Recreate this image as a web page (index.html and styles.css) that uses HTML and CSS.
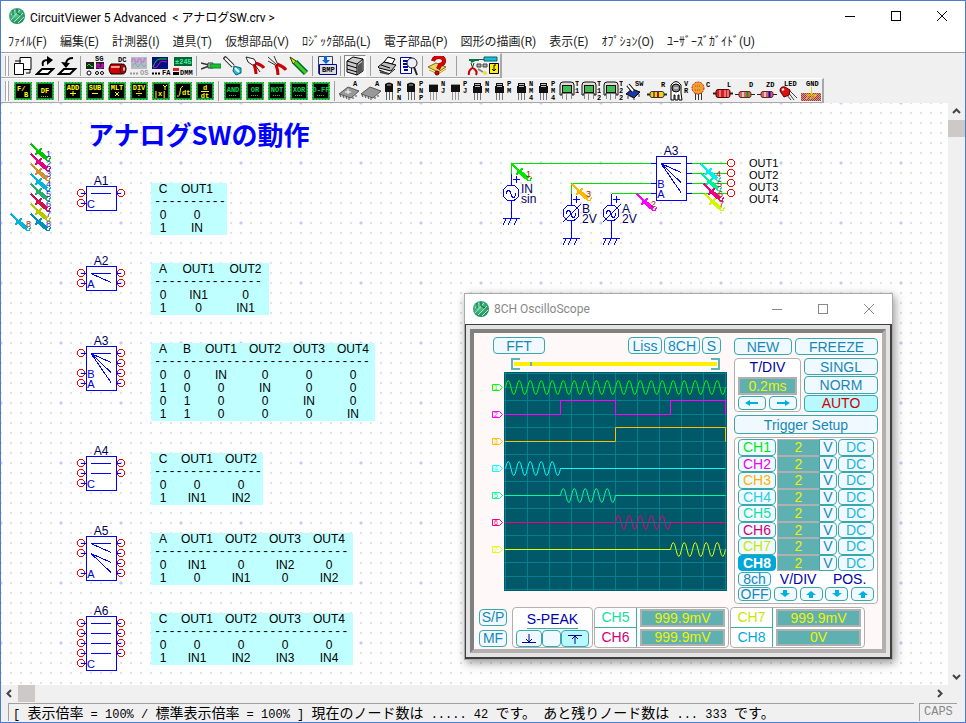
FILE: index.html
```html
<!DOCTYPE html>
<html lang="ja">
<head>
<meta charset="utf-8">
<title>CircuitViewer 5 Advanced</title>
<link rel="stylesheet" href="styles.css">
</head>
<body>
<svg class="sprite" aria-hidden="true">
  <defs>
    <radialGradient id="ball" cx="40%" cy="35%" r="65%"><stop offset="0" stop-color="#5fd39a"/><stop offset="1" stop-color="#1f8a5a"/></radialGradient>
    <pattern id="checker" width="2" height="2" patternUnits="userSpaceOnUse"><rect width="2" height="2" fill="#c99"/><path d="M0 0h1v1h-1zM1 1h1v1h-1z" fill="#a33"/></pattern>
    <symbol id="logo" viewBox="0 0 18 18"><circle cx="9" cy="9" r="8" fill="url(#ball)"/><path d="M3 13L12 3M6 15L15 6M3 8l4-5M10 16l6-6" stroke="#a8ecc8" stroke-width="1"/><path d="M5 3v5M9 2v4l4 2" stroke="#0b5c38" fill="none"/></symbol>
    <symbol id="chip" viewBox="0 0 20 20"><rect x="1" y="1" width="18" height="18" fill="#000"/><rect x="2" y="2" width="16" height="16" fill="none" stroke="#0a9a28" stroke-width="2"/><rect x="1.500" y="1.500" width="17" height="17" fill="none" stroke="#9fe0a0" stroke-dasharray="1 2"/></symbol>
    <symbol id="bjt" viewBox="0 0 20 20"><path d="M2 3q4-3 8 0v8H2z" fill="#111"/><path d="M4 4h4" stroke="#aaa"/><path d="M3.500 11v8M6.500 11v8M9.500 11v8" stroke="#666"/></symbol>
    <symbol id="jfet" viewBox="0 0 20 20"><path d="M2 3h9v8H2z" fill="#111"/><path d="M2 3.500h9" stroke="#999"/><path d="M3.500 11v8M6.500 11v8M9.500 11v8" stroke="#999"/></symbol>
    <symbol id="mos" viewBox="0 0 20 20"><path d="M3 2h7v3h1v7H2V5h1z" fill="#111"/><path d="M4 3.500h5M4 5.500h5" stroke="#bbb"/><path d="M3.500 12v7M6.500 12v7M9.500 12v7" stroke="#777"/></symbol>
    <symbol id="coil" viewBox="0 0 20 20"><path d="M1 14V4q0-3 3-3h8q3 0 3 3v10h-2v-2H3v2z" fill="#ddd" stroke="#111"/><rect x="3.500" y="4.500" width="9" height="7" fill="#0a9a28" stroke="#111"/><path d="M5 5v6M7 5v6M9 5v6M11 5v6" stroke="#7fe07f"/><path d="M3.500 13v5M7.500 13v6M12.500 13v5" stroke="#888"/></symbol>
    <symbol id="opamp" viewBox="0 0 20 20"><path d="M0 13l9-7 11 4-8 7z" fill="#999" stroke="#555"/><path d="M1 14l1 2M4 15l1 2M7 16l1 2M10 17v2M14 16v2M17 14v2" stroke="#444"/></symbol>
    <symbol id="probe" viewBox="-2 -2 26 22" overflow="visible"><path d="M0 0l8 8" stroke="currentColor" stroke-width="1.500"/><path d="M4 10.500l7-6M5 6.500l6 4" stroke="currentColor" stroke-width="2"/><path d="M8 8l8 7" stroke="currentColor" stroke-width="4"/><path d="M15 16.500h3l1.500-3" stroke="currentColor" fill="none"/></symbol>
    <symbol id="source" viewBox="-10 -10 20 20" overflow="visible"><circle r="8" fill="#fff" stroke="#00f"/><path d="M-5 1q2.500-8 5 0t5-1" fill="none" stroke="#00f"/><path d="M2-13.500h7M5.500-17v7" stroke="#00f"/></symbol>
    <symbol id="ground" viewBox="-10 -2 20 10" overflow="visible"><path d="M-8 0h17M-5 1l-3 6M0 1l-3 6M6 1l-3 6" stroke="#00f"/></symbol>
    <symbol id="pin" viewBox="-5 -5 10 10" overflow="visible"><circle r="3.500" fill="none" stroke="#f00"/><path d="M0 .5h5" stroke="#00f"/></symbol>
    <symbol id="pinr" viewBox="-5 -5 10 10" overflow="visible"><circle r="3.500" fill="none" stroke="#f00"/><path d="M0 .5h-4" stroke="#00f"/></symbol>
    <symbol id="arrow" viewBox="0 0 14 8"><path d="M0 4l5-3v2h8v2H5v2z" fill="#00b0e0"/></symbol>
    <symbol id="vdown" viewBox="0 0 12 8"><path d="M4 0h4v3h3L6 7 1 3h3z" fill="#00b0e0"/></symbol>
  </defs>
</svg>

<div class="window">
  <header class="titlebar">
    <svg class="logo"><use href="#logo"/></svg>
    <h1 class="caption">CircuitViewer 5 Advanced&nbsp; &lt; アナログSW.crv &gt;</h1>
    <div class="winbtns">
      <button aria-label="最小化"><svg width="12" height="12"><path d="M1 6.500h10" stroke="#000"/></svg></button>
      <button aria-label="最大化"><svg width="12" height="12"><rect x="1.500" y="1.500" width="9" height="9" fill="none" stroke="#000"/></svg></button>
      <button aria-label="閉じる"><svg width="12" height="12"><path d="M1 1l10 10M11 1L1 11" stroke="#000"/></svg></button>
    </div>
  </header>

  <nav class="menubar">
    <button>ﾌｧｲﾙ(F)</button><button>編集(E)</button><button>計測器(I)</button><button>道具(T)</button><button>仮想部品(V)</button><button>ﾛｼﾞｯｸ部品(L)</button><button>電子部品(P)</button><button>図形の描画(R)</button><button>表示(E)</button><button>ｵﾌﾟｼｮﾝ(O)</button><button>ﾕｰｻﾞｰｽﾞｶﾞｲﾄﾞ(U)</button>
  </nav>

  <div class="toolbars">
    <div class="toolbar">
      <span class="grip"></span>
      <button class="tool" aria-label="新規"><svg viewBox="0 0 20 20"><path d="M7 1.500h11v12H7z" fill="#fff" stroke="#000"/><path d="M1.500 7.500h9v11h-9z" fill="#fff" stroke="#000"/><path d="M2 5h6M13 17h4v-3" fill="none" stroke="#000"/></svg></button>
      <button class="tool" aria-label="開く"><svg viewBox="0 0 20 20"><path d="M2 18l5-5h11l-5 5z" fill="#fff" stroke="#000" stroke-width="2"/><path d="M8 10q-2-6 5-6" fill="none" stroke="#000" stroke-width="2"/><path d="M12 0l6 4-6 5z"/></svg></button>
      <button class="tool" aria-label="保存"><svg viewBox="0 0 20 20"><path d="M2 18l5-5h11l-5 5z" fill="#fff" stroke="#000" stroke-width="2"/><path d="M16 2q-6 0-7 5" fill="none" stroke="#000" stroke-width="2"/><path d="M4 6l9 1-4 5z"/></svg></button>
      <span class="sep"></span>
      <button class="tool" aria-label="信号発生器"><svg viewBox="0 0 20 20"><text x="10" y="5" class="tiny">SG</text><path d="M1 6h8v7H1zM11 6h8v7h-8z" fill="#222"/><path d="M2 10l2-2 3 3 1-1" fill="none" stroke="#0f0"/><path d="M12 12V8h2v4h3V8h1v4" fill="none" stroke="#f0f"/><circle cx="4" cy="17" r="2" fill="#fff" stroke="#000"/><circle cx="12" cy="17" r="1.500" fill="#fff" stroke="#000"/><circle cx="17" cy="17" r="1.500" fill="#fff" stroke="#000"/></svg></button>
      <button class="tool" aria-label="直流電源"><svg viewBox="0 0 20 20"><text x="11" y="6" class="tiny">DC</text><path d="M4 8h11v10H4q-4-5 0-10z" fill="#d00000" stroke="#000"/><path d="M4 11h11" stroke="#f99" stroke-width="2"/><ellipse cx="16" cy="13" rx="3" ry="5" fill="#b00" stroke="#000"/><ellipse cx="17" cy="13" rx="1" ry="2" fill="#ccc"/></svg></button>
      <button class="tool" aria-label="オシロスコープ" disabled><svg viewBox="0 0 20 20"><path d="M2 1h16v12H2z" fill="#b8b8c8"/><path d="M3 6V3h3v3h3V3h3v3h3V3h2" fill="none" stroke="#c070d0"/><path d="M3 10l3-3 3 4 3-4 3 4 2-2" fill="none" stroke="#70b8a0"/><path d="M1 17.500h9" stroke="#999" stroke-width="2" stroke-dasharray="2 1"/><text x="11" y="19" class="tiny dim">OS</text></svg></button>
      <button class="tool" aria-label="周波数分析"><svg viewBox="0 0 20 20"><path d="M1 1h16v12H1z" fill="#001080"/><path d="M2 11q3-8 7-8h7" fill="none" stroke="#0d0"/><path d="M2 12q5 0 6-4t8-2" fill="none" stroke="#d0d"/><path d="M1 17.500h9" stroke="#000" stroke-width="2" stroke-dasharray="2 1"/><text x="11" y="19" class="tiny">FA</text></svg></button>
      <button class="tool" aria-label="デジタルマルチメーター"><svg viewBox="0 0 20 20"><path d="M1 1h18v9H1z" fill="#063"/><text x="2" y="8" class="tiny mint">±245</text><path d="M0 12h6v3H0z" fill="#e02020"/><path d="M0 16h6v3H0z"/><text x="7" y="19" class="tiny">DMM</text></svg></button>
      <span class="sep"></span>
      <button class="tool" aria-label="ニッパー"><svg viewBox="0 0 20 20"><path d="M0 7l8 2M0 13l8-3" stroke="#333" stroke-width="1.500"/><path d="M7 7h5v5H7z" fill="#ddd" stroke="#333"/><path d="M9 8h11v4H9z" fill="#20c020" stroke="#084"/></svg></button>
      <button class="tool" aria-label="はんだごて"><svg viewBox="0 0 20 20"><path d="M1 1l9 9" stroke="#333" stroke-width="4"/><path d="M2 2l8 8" stroke="#fff" stroke-width="2"/><path d="M11 10l7 2v5l-5 2-3-4z" fill="#30b8e0" stroke="#066"/><path d="M12 12l4 4" stroke="#fff" stroke-width="2"/></svg></button>
      <button class="tool" aria-label="ペンチ"><svg viewBox="0 0 20 20"><path d="M1 1l8 2 3 5-3 2-6-4z" fill="#fff" stroke="#222"/><path d="M9 8q2 7 2 10M10 7q7 2 9 5" fill="none" stroke="#c00" stroke-width="3"/><path d="M10 9l5 7" stroke="#222"/></svg></button>
      <button class="tool" aria-label="ラジオペンチ"><svg viewBox="0 0 20 20"><path d="M1 1l9 8M7 0l4 9M1 5l9 5" stroke="#333"/><path d="M9 9q2 5 2 10M10 8q7 3 9 6" fill="none" stroke="#c00" stroke-width="3"/></svg></button>
      <button class="tool" aria-label="プローブ"><svg viewBox="0 0 20 20"><path d="M1 1l6 4L4 8z" fill="#dd0" stroke="#240"/><path d="M6 6l11 11" stroke="#063" stroke-width="6"/><path d="M6 6l11 11" stroke="#40d020" stroke-width="3"/></svg></button>
      <span class="sep"></span>
      <button class="tool" aria-label="BMP"><svg viewBox="0 0 20 20"><path d="M1.500.5h14v17h-14z" fill="#e8f0ff" stroke="#345"/><path d="M7 0h3v4h3l-4 4-4-4h2z" fill="#1060e0"/><path d="M2.500 8.500h17v10h-17z" fill="#ddd" stroke="#0000a0"/><text x="5" y="16" class="tiny">BMP</text></svg></button>
      <span class="sep"></span>
      <button class="tool pressed" aria-label="部品箱"><svg viewBox="0 0 20 20"><path d="M2 5l6-4 10 2v12l-6 4-10-3z" fill="#ccc" stroke="#000"/><path d="M2 5l10 3 6-5M12 8v11M2 9l10 3M2 13l10 3" fill="none" stroke="#000"/><path d="M13 9l4-3v9l-4 3z" fill="#555"/></svg></button>
      <span class="sep wide"></span>
      <button class="tool" aria-label="印刷"><svg viewBox="0 0 20 20"><path d="M7 6l4-5 7 2-3 5z" fill="#fff" stroke="#000"/><path d="M1 11l6-5 12 3-5 6-12-3z" fill="#bbb" stroke="#000"/><path d="M2 14l10 4 6-5M4 9l9 3" fill="none" stroke="#000"/><path d="M3 16l9 2" stroke="#444" stroke-width="2"/></svg></button>
      <button class="tool" aria-label="印刷プレビュー"><svg viewBox="0 0 20 20"><path d="M1.500 1.500h11v16h-11z" fill="#fff" stroke="#00a"/><path d="M4 5h5M4 8h4M4 11h5M5 14h4" stroke="#00a" stroke-width="2"/><circle cx="13" cy="7" r="5" fill="#eef" stroke="#222"/><path d="M15 11l3 8" stroke="#222" stroke-width="2"/></svg></button>
      <span class="sep"></span>
      <button class="tool" aria-label="ヘルプ"><svg viewBox="0 0 20 20"><path d="M1 11l8-4 10 4-8 5z" fill="#e8d860" stroke="#860"/><path d="M2 14l9 4 8-5" fill="none" stroke="#c8a000"/><path d="M6 5q1-4 6-4t5 4q0 3-4 4l-2 4" fill="none" stroke="#600" stroke-width="4"/><path d="M6 5q1-4 6-4t5 4q0 3-4 4l-2 4" fill="none" stroke="#e00000" stroke-width="3"/><circle cx="10" cy="17" r="2" fill="#e00000" stroke="#600"/></svg></button>
      <span class="sep far"></span>
      <button class="tool long" aria-label="道具箱"><svg viewBox="0 0 32 20"><path d="M2 4h10M4 6l4-2" stroke="#074" stroke-width="2"/><path d="M12 3.500h6" stroke="#444"/><path d="M17 1h13v4H17z" fill="#20b8e0" stroke="#066"/><path d="M10 8h4v3h-4zM16 8h4v3h-4z" fill="#aaa" stroke="#444"/><path d="M4 7l2 6M7 7l-2 6" stroke="#333"/><path d="M5 12q-4 3-3 7M6 12q5 3 3 7" fill="none" stroke="#c00" stroke-width="2"/><path d="M11 13l5 3" stroke="#888" stroke-width="2"/><circle cx="18" cy="17" r="2" fill="#fd2"/><path d="M22.500 7.500h9v10h-9z" fill="#fff000" stroke="#000"/><path d="M29 9h-2v6m-2-2l2 2 2-2" fill="none" stroke="#000"/></svg></button>
    </div>
    <div class="toolbar">
      <span class="grip"></span>
      <button class="tool"><svg viewBox="0 0 20 20"><use href="#chip"/><text x="4" y="10" class="lcd">F/</text><text x="11" y="16" class="lcd">B</text></svg></button>
      <button class="tool"><svg viewBox="0 0 20 20"><use href="#chip"/><text x="10" y="12" class="lcd mid">DF</text><path d="M6 15.500h8" stroke="#aa0" stroke-dasharray="1 1"/></svg></button>
      <span class="sep"></span>
      <button class="tool"><svg viewBox="0 0 20 20"><use href="#chip"/><text x="10" y="9" class="lcd mid">ADD</text><path d="M7 12.500h6M10 10v5" stroke="#ff0"/></svg></button>
      <button class="tool"><svg viewBox="0 0 20 20"><use href="#chip"/><text x="10" y="9" class="lcd mid">SUB</text><path d="M7 12.500h6" stroke="#ff0"/></svg></button>
      <button class="tool"><svg viewBox="0 0 20 20"><use href="#chip"/><text x="10" y="9" class="lcd mid">MLT</text><path d="M8 11l4 4M12 11l-4 4" stroke="#ff0"/></svg></button>
      <button class="tool"><svg viewBox="0 0 20 20"><use href="#chip"/><text x="10" y="9" class="lcd mid">DIV</text><path d="M7 12.500h6M10 10v1M10 14v1" stroke="#ff0"/></svg></button>
      <button class="tool"><svg viewBox="0 0 20 20"><use href="#chip"/><text x="9" y="15" class="lcd mid">|x|</text><path d="M12 4l2 2 2-2M14 6v3" fill="none" stroke="#ff0"/></svg></button>
      <button class="tool"><svg viewBox="0 0 20 20"><use href="#chip"/><path d="M4 15q3 1 3-4t3-6" fill="none" stroke="#ff0"/><text x="9" y="14" class="lcd">dt</text></svg></button>
      <button class="tool"><svg viewBox="0 0 20 20"><use href="#chip"/><text x="10" y="9" class="lcd mid">d</text><path d="M6 10.500h8" stroke="#ff0"/><text x="10" y="17" class="lcd mid">dt</text></svg></button>
      <span class="sep"></span>
      <button class="tool"><svg viewBox="0 0 20 20"><use href="#chip"/><text x="10" y="11" class="lcd logic">AND</text><path d="M6 14.500h8" stroke="#0c4" stroke-dasharray="1 1"/></svg></button>
      <button class="tool"><svg viewBox="0 0 20 20"><use href="#chip"/><text x="10" y="11" class="lcd logic">OR</text><path d="M6 14.500h8" stroke="#0c4" stroke-dasharray="1 1"/></svg></button>
      <button class="tool"><svg viewBox="0 0 20 20"><use href="#chip"/><text x="10" y="11" class="lcd logic">NOT</text><path d="M6 14.500h8" stroke="#0c4" stroke-dasharray="1 1"/></svg></button>
      <button class="tool"><svg viewBox="0 0 20 20"><use href="#chip"/><text x="10" y="11" class="lcd logic">XOR</text><path d="M6 14.500h8" stroke="#0c4" stroke-dasharray="1 1"/></svg></button>
      <button class="tool"><svg viewBox="0 0 20 20"><use href="#chip"/><text x="10" y="11" class="lcd logic">D-FF</text><path d="M6 14.500h8" stroke="#0c4" stroke-dasharray="1 1"/></svg></button>
      <span class="sep"></span>
      <button class="tool"><svg viewBox="0 0 20 20"><use href="#opamp"/><path d="M6 11h6M9 8v5" stroke="#fff"/><text x="14" y="5" class="tiny">A</text></svg></button>
      <button class="tool"><svg viewBox="0 0 20 20"><use href="#opamp"/><text x="14" y="5" class="tiny">A</text></svg></button>
      <button class="tool"><svg viewBox="0 0 20 20"><use href="#bjt"/><text x="14" y="5" class="tiny">N</text><text x="14" y="12" class="tiny">P</text><text x="14" y="19" class="tiny">N</text></svg></button>
      <button class="tool"><svg viewBox="0 0 20 20"><use href="#bjt"/><text x="14" y="5" class="tiny">P</text><text x="14" y="12" class="tiny">N</text><text x="14" y="19" class="tiny">P</text></svg></button>
      <button class="tool"><svg viewBox="0 0 20 20"><use href="#jfet"/><text x="14" y="5" class="tiny">N</text><text x="14" y="12" class="tiny">J</text></svg></button>
      <button class="tool"><svg viewBox="0 0 20 20"><use href="#jfet"/><text x="14" y="5" class="tiny">P</text><text x="14" y="12" class="tiny">J</text></svg></button>
      <button class="tool"><svg viewBox="0 0 20 20"><use href="#mos"/><text x="14" y="5" class="tiny">N</text><text x="14" y="12" class="tiny">M</text></svg></button>
      <button class="tool"><svg viewBox="0 0 20 20"><use href="#mos"/><text x="14" y="5" class="tiny">P</text><text x="14" y="12" class="tiny">M</text></svg></button>
      <button class="tool"><svg viewBox="0 0 20 20"><use href="#mos"/><text x="14" y="5" class="tiny">N</text><text x="14" y="12" class="tiny">M</text><text x="14" y="19" class="tiny">4</text></svg></button>
      <button class="tool"><svg viewBox="0 0 20 20"><use href="#mos"/><text x="14" y="5" class="tiny">P</text><text x="14" y="12" class="tiny">M</text><text x="14" y="19" class="tiny">4</text></svg></button>
      <button class="tool"><svg viewBox="0 0 20 20"><use href="#coil"/><text x="16" y="5" class="tiny">T</text><text x="16" y="12" class="tiny">1</text></svg></button>
      <button class="tool"><svg viewBox="0 0 20 20"><use href="#coil"/><text x="16" y="5" class="tiny">T</text><text x="16" y="12" class="tiny">1</text><text x="16" y="19" class="tiny">2</text></svg></button>
      <button class="tool"><svg viewBox="0 0 20 20"><use href="#coil"/><text x="16" y="5" class="tiny">T</text><text x="16" y="12" class="tiny">2</text><text x="16" y="19" class="tiny">2</text></svg></button>
      <button class="tool"><svg viewBox="0 0 20 20"><path d="M1 13l6-5 8 3-6 6z" fill="#1838a0" stroke="#000"/><path d="M3 4l5 6" stroke="#000" stroke-width="4"/><path d="M3 4l5 6" stroke="#fff" stroke-width="2"/><path d="M3 15v3M9 17v2M14 13v3" stroke="#333"/><text x="10" y="5" class="tiny">SW</text></svg></button>
      <button class="tool"><svg viewBox="0 0 20 20"><path d="M0 13.500h20" stroke="#222" stroke-width="2"/><rect x="3" y="10.500" width="14" height="6" rx="2" fill="#e0d820" stroke="#333"/><path d="M7 11v5" stroke="#a50" stroke-width="2"/><path d="M11 11v5" stroke="#c00" stroke-width="2"/><text x="14" y="6" class="tiny">R</text></svg></button>
      <button class="tool"><svg viewBox="0 0 20 20"><path d="M2 12V4q5-7 10 0v8l1 7h-3v-5H9v5H6v-5H5v5H2z" fill="#fff" stroke="#000"/><circle cx="7" cy="7" r="4" fill="#888" stroke="#000"/><path d="M5 7h4" stroke="#fff"/><text x="15" y="5" class="tiny">V</text><text x="15" y="12" class="tiny">R</text></svg></button>
      <button class="tool"><svg viewBox="0 0 20 20"><path d="M4.500 12v7M7.500 12v7M10.500 12v7" stroke="#333"/><circle cx="7" cy="7" r="6" fill="#f0a030" stroke="#b02010" stroke-dasharray="2 1"/><path d="M4 5h6M4 9h6" stroke="#d04020" stroke-dasharray="1 1"/><text x="15" y="6" class="tiny">C</text></svg></button>
      <button class="tool"><svg viewBox="0 0 20 20"><path d="M0 12.500h20" stroke="#222" stroke-width="2"/><rect x="3" y="8.500" width="14" height="8" rx="2" fill="#d02020" stroke="#500"/><path d="M7 9v7M12 9v7M15 9v7" stroke="#fcc"/><text x="14" y="6" class="tiny">L</text></svg></button>
      <button class="tool"><svg viewBox="0 0 20 20"><path d="M0 13.500h20" stroke="#222"/><rect x="4" y="10.500" width="12" height="6" rx="2" fill="#e06060" stroke="#622"/><path d="M8 11v5" stroke="#ccc" stroke-width="2"/><path d="M12.500 11v5" stroke="#0a0" stroke-width="2"/><text x="14" y="6" class="tiny">D</text></svg></button>
      <button class="tool"><svg viewBox="0 0 20 20"><path d="M0 13.500h20" stroke="#222"/><rect x="4" y="10.500" width="12" height="6" rx="2" fill="#e06060" stroke="#622"/><path d="M8 11v5" stroke="#ccc" stroke-width="2"/><path d="M12.500 11v5" stroke="#00d" stroke-width="2"/><text x="9" y="6" class="tiny">ZD</text></svg></button>
      <button class="tool"><svg viewBox="0 0 20 20"><path d="M9 11l6 8M11 10l7 7M7 13l5 6" stroke="#444"/><path d="M1 10q0-5 5-4l5 3-1 5-5 2z" fill="#e01010" stroke="#500"/><path d="M3 9l2-1" stroke="#fff" stroke-width="2"/><text x="5" y="5" class="tiny">LED</text></svg></button>
      <button class="tool"><svg viewBox="0 0 20 20"><rect x="0" y="12" width="20" height="8" fill="url(#checker)"/><path d="M10.500 6v8M5 14h11M8 14l-3 4M12 14l-3 4M15 14l-3 4" stroke="#e8d800"/><text x="5" y="5" class="tiny">GND</text></svg></button>
    </div>
  </div>

  <main class="workspace">
    <div class="canvas">
      <svg class="schematic">
        <g transform="translate(-1 -103)">
          <text x="88" y="145" class="heading">アナログSWの動作</text>

          <g class="probes">
            <g color="#00c800"><use href="#probe" x="29" y="142" width="26" height="22"/></g><text x="46" y="157">1</text>
            <g color="#e6007e"><use href="#probe" x="29" y="152" width="26" height="22"/></g><text x="46" y="167">2</text>
            <g color="#d09030"><use href="#probe" x="29" y="162" width="26" height="22"/></g><text x="46" y="177">3</text>
            <g color="#00b4dc"><use href="#probe" x="29" y="172" width="26" height="22"/></g><text x="46" y="187">4</text>
            <g color="#20b070"><use href="#probe" x="29" y="182" width="26" height="22"/></g><text x="46" y="197">5</text>
            <g color="#d01050"><use href="#probe" x="29" y="192" width="26" height="22"/></g><text x="46" y="207">6</text>
            <g color="#b8c800"><use href="#probe" x="29" y="202" width="26" height="22"/></g><text x="46" y="217">7</text>
            <g color="#0090c0"><use href="#probe" x="29" y="212" width="26" height="22"/></g><text x="46" y="227">8</text>
            <g color="#00b4dc"><use href="#probe" x="9" y="212" width="26" height="22"/></g><text x="26" y="227" class="live">8</text>
          </g>

          <g class="part">
            <text x="101" y="185">A1</text><rect x="86.500" y="186.500" width="30" height="24"/>
            <path d="M91 193.500h20"/><text x="91" y="208" class="port">C</text>
            <use href="#pin" x="76" y="188" width="10" height="10"/><use href="#pin" x="76" y="198" width="10" height="10"/><use href="#pinr" x="116" y="188" width="10" height="10"/>
          </g>
          <g class="part">
            <text x="101" y="265">A2</text><rect x="86.500" y="266.500" width="30" height="24"/>
            <path d="M111 273.500h-20l20 9"/><text x="91" y="288" class="port">A</text>
            <use href="#pin" x="76" y="268" width="10" height="10"/><use href="#pin" x="76" y="278" width="10" height="10"/><use href="#pinr" x="116" y="268" width="10" height="10"/><use href="#pinr" x="116" y="278" width="10" height="10"/>
          </g>
          <g class="part">
            <text x="101" y="345">A3</text><rect x="86.500" y="346.500" width="30" height="44"/>
            <path d="M111 353.500h-20l20 9M91 353.500l20 19M91 353.500l20 29"/><text x="91" y="378" class="port">B</text><text x="91" y="388" class="port">A</text>
            <use href="#pin" x="76" y="348" width="10" height="10"/><use href="#pin" x="76" y="368" width="10" height="10"/><use href="#pin" x="76" y="378" width="10" height="10"/><use href="#pinr" x="116" y="348" width="10" height="10"/><use href="#pinr" x="116" y="358" width="10" height="10"/><use href="#pinr" x="116" y="368" width="10" height="10"/><use href="#pinr" x="116" y="378" width="10" height="10"/>
          </g>
          <g class="part">
            <text x="101" y="455">A4</text><rect x="86.500" y="456.500" width="30" height="34"/>
            <path d="M91 463.500h20M91 473.500h20"/><text x="91" y="488" class="port">C</text>
            <use href="#pin" x="76" y="458" width="10" height="10"/><use href="#pin" x="76" y="468" width="10" height="10"/><use href="#pin" x="76" y="478" width="10" height="10"/><use href="#pinr" x="116" y="458" width="10" height="10"/><use href="#pinr" x="116" y="468" width="10" height="10"/>
          </g>
          <g class="part">
            <text x="101" y="535">A5</text><rect x="86.500" y="536.500" width="30" height="44"/>
            <path d="M111 543.500h-20l20 9M111 562.500l-20-9l20 19"/><text x="91" y="578" class="port">A</text>
            <use href="#pin" x="76" y="538" width="10" height="10"/><use href="#pin" x="76" y="548" width="10" height="10"/><use href="#pin" x="76" y="568" width="10" height="10"/><use href="#pinr" x="116" y="538" width="10" height="10"/><use href="#pinr" x="116" y="548" width="10" height="10"/><use href="#pinr" x="116" y="558" width="10" height="10"/><use href="#pinr" x="116" y="568" width="10" height="10"/>
          </g>
          <g class="part">
            <text x="101" y="615">A6</text><rect x="86.500" y="616.500" width="30" height="54"/>
            <path d="M91 623.500h20M91 633.500h20M91 643.500h20M91 653.500h20"/><text x="91" y="668" class="port">C</text>
            <use href="#pin" x="76" y="618" width="10" height="10"/><use href="#pin" x="76" y="628" width="10" height="10"/><use href="#pin" x="76" y="638" width="10" height="10"/><use href="#pin" x="76" y="648" width="10" height="10"/><use href="#pin" x="76" y="658" width="10" height="10"/><use href="#pinr" x="116" y="618" width="10" height="10"/><use href="#pinr" x="116" y="628" width="10" height="10"/><use href="#pinr" x="116" y="638" width="10" height="10"/><use href="#pinr" x="116" y="648" width="10" height="10"/>
          </g>

          <path d="M511.500 174V163.500H651M571.500 194V183.500H651M611.500 193.500H651M691 163.500h37M691 173.500h37M691 183.500h37M691 193.500h37" fill="none" stroke="#00e000"/>
          <path d="M511.500 174v44M571.500 194v44M611.500 194v44M651 163.500h5M651 183.500h5M651 193.500h5M687 163.500h5M687 173.500h5M687 183.500h5M687 193.500h5" fill="none" stroke="#00f"/>
          <g class="part">
            <text x="671" y="155">A3</text><rect x="656.500" y="156.500" width="30" height="44"/>
            <path d="M681 163.500h-20l20 9M661 163.500l20 19M661 163.500l20 29"/><text x="661" y="188" class="port">B</text><text x="661" y="198" class="port">A</text>
          </g>
          <g fill="none" stroke="#f00"><circle cx="731" cy="163" r="3.500"/><circle cx="731" cy="173" r="3.500"/><circle cx="731" cy="183" r="3.500"/><circle cx="731" cy="193" r="3.500"/></g>
          <use href="#source" x="501" y="183" width="20" height="20"/><use href="#source" x="561" y="203" width="20" height="20"/><use href="#source" x="601" y="203" width="20" height="20"/>
          <path d="M563 222l18-18M603 222l18-18" stroke="#00f"/>
          <use href="#ground" x="501" y="216" width="20" height="10"/><use href="#ground" x="561" y="236" width="20" height="10"/><use href="#ground" x="601" y="236" width="20" height="10"/>
          <g class="names">
            <text x="521" y="193">IN</text><text x="521" y="203">sin</text>
            <text x="582" y="213">B</text><text x="582" y="223">2V</text>
            <text x="622" y="213">A</text><text x="622" y="223">2V</text>
          </g>
          <g class="outs">
            <text x="749" y="167">OUT1</text><text x="749" y="179">OUT2</text><text x="749" y="191">OUT3</text><text x="749" y="203">OUT4</text>
          </g>
          <g class="probes live">
            <g color="#00e800"><use href="#probe" x="510" y="162" width="26" height="22"/></g><text x="526" y="177">1</text>
            <g color="#ffb800"><use href="#probe" x="570" y="182" width="26" height="22"/></g><text x="586" y="197">3</text>
            <g color="#f0f"><use href="#probe" x="635" y="192" width="26" height="22"/></g><text x="651" y="207">2</text>
            <g color="#00f0f0"><use href="#probe" x="699" y="162" width="26" height="22"/></g><text x="716" y="177">4</text>
            <g color="#00f0a0"><use href="#probe" x="700" y="172" width="26" height="22"/></g><text x="717" y="187">5</text>
            <g color="#f00080"><use href="#probe" x="702" y="182" width="26" height="22"/></g><text x="718" y="197">6</text>
            <g color="#d0f800"><use href="#probe" x="703" y="192" width="26" height="22"/></g><text x="719" y="207">7</text>
          </g>
        </g>
      </svg>

      <table class="truth t1">
        <colgroup><col class="sel"><col class="out"></colgroup>
        <tr><th>C</th><th>OUT1</th></tr>
        <tr class="rule"><td colspan="2">----------</td></tr>
        <tr><td>0</td><td>0</td></tr><tr><td>1</td><td>IN</td></tr>
      </table>
      <table class="truth t2">
        <colgroup><col class="sel"><col class="broad"><col class="broad"></colgroup>
        <tr><th>A</th><th>OUT1</th><th>OUT2</th></tr>
        <tr class="rule"><td colspan="3">---------------</td></tr>
        <tr><td>0</td><td>IN1</td><td>0</td></tr><tr><td>1</td><td>0</td><td>IN1</td></tr>
      </table>
      <table class="truth t3">
        <colgroup><col class="sel"><col class="sel"><col class="out"><col class="out"><col class="out"><col class="out"></colgroup>
        <tr><th>A</th><th>B</th><th>OUT1</th><th>OUT2</th><th>OUT3</th><th>OUT4</th></tr>
        <tr class="rule"><td colspan="6">------------------------------</td></tr>
        <tr><td>0</td><td>0</td><td>IN</td><td>0</td><td>0</td><td>0</td></tr>
        <tr><td>1</td><td>0</td><td>0</td><td>IN</td><td>0</td><td>0</td></tr>
        <tr><td>0</td><td>1</td><td>0</td><td>0</td><td>IN</td><td>0</td></tr>
        <tr><td>1</td><td>1</td><td>0</td><td>0</td><td>0</td><td>IN</td></tr>
      </table>
      <table class="truth t4">
        <colgroup><col class="sel"><col class="out"><col class="out"></colgroup>
        <tr><th>C</th><th>OUT1</th><th>OUT2</th></tr>
        <tr class="rule"><td colspan="3">---------------</td></tr>
        <tr><td>0</td><td>0</td><td>0</td></tr><tr><td>1</td><td>IN1</td><td>IN2</td></tr>
      </table>
      <table class="truth t5">
        <colgroup><col class="sel"><col class="out"><col class="out"><col class="out"><col class="out"></colgroup>
        <tr><th>A</th><th>OUT1</th><th>OUT2</th><th>OUT3</th><th>OUT4</th></tr>
        <tr class="rule"><td colspan="5">---------------------------</td></tr>
        <tr><td>0</td><td>IN1</td><td>0</td><td>IN2</td><td>0</td></tr><tr><td>1</td><td>0</td><td>IN1</td><td>0</td><td>IN2</td></tr>
      </table>
      <table class="truth t6">
        <colgroup><col class="sel"><col class="out"><col class="out"><col class="out"><col class="out"></colgroup>
        <tr><th>C</th><th>OUT1</th><th>OUT2</th><th>OUT3</th><th>OUT4</th></tr>
        <tr class="rule"><td colspan="5">---------------------------</td></tr>
        <tr><td>0</td><td>0</td><td>0</td><td>0</td><td>0</td></tr><tr><td>1</td><td>IN1</td><td>IN2</td><td>IN3</td><td>IN4</td></tr>
      </table>

      <section class="scope">
        <header class="scope-title">
          <svg class="logo"><use href="#logo"/></svg>
          <h2 class="caption">8CH OscilloScope</h2>
          <div class="winbtns">
            <button aria-label="最小化"><svg width="12" height="12"><path d="M1 6.500h10" stroke="#888"/></svg></button>
            <button aria-label="最大化"><svg width="12" height="12"><rect x="1.500" y="1.500" width="9" height="9" fill="none" stroke="#888"/></svg></button>
            <button aria-label="閉じる"><svg width="12" height="12"><path d="M1 1l10 10M11 1L1 11" stroke="#888"/></svg></button>
          </div>
        </header>
        <div class="bezel"><div class="face">
          <div class="upper">
            <div class="display">
              <div class="modes"><button class="key fft">FFT</button><button class="key liss">Liss</button><button class="key ch8">8CH</button><button class="key s">S</button></div>
              <svg class="range" viewBox="0 0 211 14"><path d="M10 2H2v10h8M201 2h8v10h-8" fill="none" stroke="#5fb4b4" stroke-width="2"/><rect x="4" y="5" width="203" height="4" fill="#fff000"/><rect x="20" y="5" width="2" height="4" fill="#5fb4b4"/></svg>
              <svg class="screen" viewBox="0 0 236 219">
                <rect x="12" width="223" height="219" fill="#005868"/>
                <path d="M13.500 0v219M35.500 0v219M57.500 0v219M79.500 0v219M101.500 0v219M123.500 0v219M145.500 0v219M167.500 0v219M189.500 0v219M211.500 0v219M233.500 0v219M12 1.500h223M12 28.500h223M12 55.500h223M12 82.500h223M12 109.500h223M12 136.500h223M12 163.500h223M12 190.500h223M12 217.500h223M12 15.500h223M12 42.500h223M12 69.500h223M12 96.500h223M12 123.500h223M12 150.500h223M12 177.500h223M12 204.500h223" stroke="#00808c"/>
                <g class="traces">
                  <path stroke="#00ff00" d="M13.500 15.500q2.750-14 5.500 0t5.500 0t5.500 0t5.500 0t5.500 0t5.500 0t5.500 0t5.500 0t5.500 0t5.500 0t5.500 0t5.500 0t5.500 0t5.500 0t5.500 0t5.500 0t5.500 0t5.500 0t5.500 0t5.500 0t5.500 0t5.500 0t5.500 0t5.500 0t5.500 0t5.500 0t5.500 0t5.500 0t5.500 0t5.500 0t5.500 0t5.500 0t5.500 0t5.500 0t5.500 0t5.500 0t5.500 0t5.500 0t5.500 0t5.500 0"/>
                  <path stroke="#ff00ff" d="M13 42.500H68.500V28.500H123.500V42.500H178.500V28.500H233.500V42.500"/>
                  <path stroke="#ffc000" d="M13 69.500H123.500V55.500H233.500V69.500"/>
                  <path stroke="#00ffff" d="M13.500 96.500q2.750-14 5.500 0t5.500 0t5.500 0t5.500 0t5.500 0t5.500 0t5.500 0t5.500 0t5.500 0t5.500 0h165"/>
                  <path stroke="#00ff9c" d="M13 123.500H68.500q2.750-14 5.500 0t5.500 0t5.500 0t5.500 0t5.500 0t5.500 0t5.500 0t5.500 0t5.500 0t5.500 0h110"/>
                  <path stroke="#f00080" d="M13 150.500H123.500q2.750-14 5.500 0t5.500 0t5.500 0t5.500 0t5.500 0t5.500 0t5.500 0t5.500 0t5.500 0t5.500 0h55"/>
                  <path stroke="#e0ff00" d="M13 177.500H178.500q2.750-14 5.500 0t5.500 0t5.500 0t5.500 0t5.500 0t5.500 0t5.500 0t5.500 0t5.500 0t5.500 0"/>
                </g>
                <g class="tags">
                  <g color="#00ff00"><path d="M.5 12.500h7l3 3-3 3h-7z"/><text x="2" y="18">1</text></g>
                  <g color="#ff00ff"><path d="M.5 39.500h7l3 3-3 3h-7z"/><text x="2" y="45">2</text></g>
                  <g color="#ffc000"><path d="M.5 66.500h7l3 3-3 3h-7z"/><text x="2" y="72">3</text></g>
                  <g color="#00ffff"><path d="M.5 93.500h7l3 3-3 3h-7z"/><text x="2" y="99">4</text></g>
                  <g color="#00ff9c"><path d="M.5 120.500h7l3 3-3 3h-7z"/><text x="2" y="126">5</text></g>
                  <g color="#f00080"><path d="M.5 147.500h7l3 3-3 3h-7z"/><text x="2" y="153">6</text></g>
                  <g color="#e0ff00"><path d="M.5 174.500h7l3 3-3 3h-7z"/><text x="2" y="180">7</text></g>
                </g>
              </svg>
            </div>
            <div class="controls">
              <div class="run"><button class="key">NEW</button><button class="key">FREEZE</button></div>
              <div class="time">
                <div class="panel tdiv">
                  <span class="legend">T/DIV</span><output class="readout">0.2ms</output>
                  <div class="pair"><button class="key" aria-label="T/DIV 減"><svg width="14" height="8"><use href="#arrow"/></svg></button><button class="key" aria-label="T/DIV 増"><svg width="14" height="8" class="flip"><use href="#arrow"/></svg></button></div>
                </div>
                <div class="sweep"><button class="key">SINGL</button><button class="key">NORM</button><button class="key active">AUTO</button></div>
              </div>
              <button class="key trigger">Trigger Setup</button>
              <div class="panel channels">
                <div class="rows">
                  <button class="key c1">CH1</button><output class="readout">2</output><button class="key unit">V</button><button class="key dc">DC</button>
                  <button class="key c2">CH2</button><output class="readout">2</output><button class="key unit">V</button><button class="key dc">DC</button>
                  <button class="key c3">CH3</button><output class="readout">2</output><button class="key unit">V</button><button class="key dc">DC</button>
                  <button class="key c4">CH4</button><output class="readout">2</output><button class="key unit">V</button><button class="key dc">DC</button>
                  <button class="key c5">CH5</button><output class="readout">2</output><button class="key unit">V</button><button class="key dc">DC</button>
                  <button class="key c6">CH6</button><output class="readout">2</output><button class="key unit">V</button><button class="key dc">DC</button>
                  <button class="key c7">CH7</button><output class="readout">2</output><button class="key unit">V</button><button class="key dc">DC</button>
                  <button class="key selected">CH8</button><output class="readout">2</output><button class="key unit">V</button><button class="key dc">DC</button>
                </div>
                <div class="adjust">
                  <button class="key">8ch</button><span class="legend two">V/DIV</span><span class="legend two">POS.</span>
                  <button class="key">OFF</button>
                  <button class="key" aria-label="V/DIV 減"><svg width="12" height="8"><use href="#vdown"/></svg></button><button class="key" aria-label="V/DIV 増"><svg width="12" height="8" class="flip"><use href="#vdown"/></svg></button><button class="key" aria-label="POS. 減"><svg width="12" height="8"><use href="#vdown"/></svg></button><button class="key" aria-label="POS. 増"><svg width="12" height="8" class="flip"><use href="#vdown"/></svg></button>
                </div>
              </div>
            </div>
          </div>
          <div class="lower">
            <div class="side"><button class="key">S/P</button><button class="key">MF</button></div>
            <div class="panel peak">
              <span class="legend">S-PEAK</span>
              <div class="peaks"><button class="key" aria-label="下ピーク"><svg width="14" height="10"><path d="M7 0v8M4 5l3 3 3-3M0 8.500h14" fill="none" stroke="#0000a0"/></svg></button><button class="key" aria-label="なし"></button><button class="key active" aria-label="上ピーク"><svg width="14" height="10"><path d="M7 10V2M4 5l3-3 3 3M0 1.500h14" fill="none" stroke="#0000a0"/></svg></button></div>
            </div>
            <div class="panel meter"><span class="c5">CH5</span><output class="readout">999.9mV</output><span class="c6">CH6</span><output class="readout">999.9mV</output></div>
            <div class="panel meter"><span class="c7">CH7</span><output class="readout">999.9mV</output><span class="c8">CH8</span><output class="readout">0V</output></div>
          </div>
        </div></div>
      </section>
    </div>

    <div class="vscroll">
      <button aria-label="上へ"><svg width="9" height="9"><path d="M1 6l3.500-3.500L8 6" fill="none" stroke="#444" stroke-width="2"/></svg></button>
      <span class="thumb"></span>
      <button class="end" aria-label="下へ"><svg width="9" height="9"><path d="M1 3l3.500 3.500L8 3" fill="none" stroke="#444" stroke-width="2"/></svg></button>
    </div>
    <div class="hscroll">
      <button aria-label="左へ"><svg width="9" height="9"><path d="M6 1L2.500 4.500 6 8" fill="none" stroke="#444" stroke-width="2"/></svg></button>
      <span class="thumb"></span>
      <button class="end" aria-label="右へ"><svg width="9" height="9"><path d="M3 1l3.500 3.500L3 8" fill="none" stroke="#444" stroke-width="2"/></svg></button>
    </div>
  </main>

  <footer class="statusbar">
    <p class="message"><span class="half">[ </span>表示倍率<span class="half"> = 100% / </span>標準表示倍率<span class="half"> = 100% ] </span>現在のノード数は<span class="half"> ..... 42 </span>です。<span class="half"> </span>あと残りノード数は<span class="half"> ... 333 </span>です。</p>
    <p class="caps">CAPS</p>
  </footer>
</div>
</body>
</html>
```
FILE: styles.css
```css
* { box-sizing: border-box; }
body { margin: 0; font-family: "Liberation Sans", "Noto Sans CJK JP", sans-serif; font-size: 12px; color: #000; }
button { margin: 0; padding: 0; border: 0; background: none; font: inherit; color: inherit; }
h1, h2, p { margin: 0; font-weight: normal; }
.sprite { position: absolute; width: 0; height: 0; }

.window { display: flex; flex-direction: column; height: 100vh; border: 1px solid #4a7dce; background: #f0f0f0; overflow: hidden; }
.titlebar { display: flex; align-items: center; height: 30px; flex: none; padding-left: 7px; background: #fff; }
.logo { width: 18px; height: 18px; flex: none; }
.caption { padding-left: 4px; font: 12px "Roboto", "Noto Sans CJK JP", sans-serif; white-space: nowrap; }
.winbtns { display: flex; margin-left: auto; }
.winbtns button { width: 46px; height: 28px; display: flex; align-items: center; justify-content: center; }

.menubar { display: flex; gap: 13px; height: 22px; flex: none; padding-left: 7px; background: #fff; border-bottom: 1px solid #a0a0a0; }
.menubar button { font: 12px/20px "Roboto", "Noto Sans CJK JP", sans-serif; white-space: nowrap; color: #222; }

.toolbars { flex: none; display: flex; flex-direction: column; align-items: flex-start; }
.toolbar { display: flex; align-items: center; height: 25px; padding-left: 4px; border-top: 1px solid #fff; border-right: 2px solid #a8a8a8; border-bottom: 1px solid #a8a8a8; }
.grip { width: 4px; height: 20px; margin-right: 3px; border: solid #a8a8a8; border-width: 0 1px; background: #fff; }
.sep { width: 1px; height: 20px; margin: 0 3px 0 2px; background: #a0a0a0; }
.sep.wide { margin: 0 5px 0 4px; }
.sep.far { margin: 0 9px 0 8px; }
.tool { width: 22px; height: 22px; padding: 1px; }
.tool svg { display: block; width: 20px; height: 20px; }
.tool.long { width: 34px; }
.tool.long svg { width: 32px; }
.tool.pressed { border: 1px solid; border-color: #888 #fff #fff #888; padding: 0; background: #f8f8f8; }
.tiny { font: bold 7px "Liberation Mono", monospace; fill: #000; }
.tiny.dim { fill: #999; }
.tiny.mint { fill: #40f0a0; }
.lcd { font: bold 7px "Liberation Mono", monospace; fill: #ff0; }
.mid, .logic { text-anchor: middle; }
.logic { fill: #00d848; }

.workspace { flex: 1; min-height: 0; display: grid; grid-template: minmax(0, 1fr) 17px / minmax(0, 1fr) 17px; }
.canvas { position: relative; overflow: hidden; background-color: #fefefe;
  background-image: radial-gradient(circle, #c8c8f4 1px, transparent 2px), radial-gradient(circle, #e2e2e6 1px, transparent 1px);
  background-size: 60px 60px, 10px 10px; background-position: 30px 30px, 5px 5px; }
.schematic { position: absolute; inset: 0; width: 100%; height: 100%; shape-rendering: crispEdges; }
.heading { font: bold 26px "Noto Sans CJK JP", sans-serif; fill: #0000ff; }
.part rect { fill: #fff; stroke: #00f; }
.part path { fill: none; stroke: #00f; }
.part text { font-size: 12px; fill: #000060; text-anchor: middle; }
.part .port { font-size: 11px; fill: #0000d0; }
.names { font-size: 12px; fill: #000060; }
.outs { font-size: 11px; }
.probes { font-size: 9px; fill: #2020c0; }
.live { fill: #a02000; }

.truth { position: absolute; left: 150px; border-collapse: separate; border-spacing: 0; table-layout: fixed; background: #bfffff; }
.truth th, .truth td { height: 13px; padding: 0; font-size: 12px; line-height: 13px; font-weight: normal; text-align: center; white-space: nowrap; }
.truth .rule td { padding-left: 3px; font-family: "Liberation Mono", monospace; text-align: left; }
.sel { width: 24px; }
.out { width: 44px; }
.broad { width: 47px; }
.t1 { top: 80px; width: 76px; padding-right: 8px; }
.t2 { top: 160px; width: 118px; }
.t3 { top: 240px; width: 224px; }
.t4 { top: 350px; width: 112px; }
.t5 { top: 430px; width: 202px; padding-right: 2px; }
.t6 { top: 510px; width: 202px; padding-right: 2px; }

.scope { position: absolute; left: 463px; top: 190px; width: 429px; border: 1px solid #aaa; background: #fff; box-shadow: 2px 3px 9px rgba(0, 0, 0, .4); }
.scope-title { display: flex; align-items: center; height: 30px; padding-left: 7px; }
.scope-title .caption { color: #888; }
.bezel { padding: 4px; border: solid #404040; border-width: 1px 2px 2px 1px; background: #e3e3e3; }
.face { padding: 4px 4px 1px; border: 4px solid; border-color: #808080 #b4b0b0 #b4b0b0 #808080; background: #fff8f8; font-size: 14px; line-height: 14px; }
.key { display: flex; align-items: center; justify-content: center; border: 1px solid #38a8ac; border-radius: 4px; background: #f0f9ff; color: #1888b8; min-width: 0; min-height: 0; }
.key.active { background: #b8f8ff; color: #d00000; }
.panel { border: 1px solid #b0b0b0; border-radius: 4px; background: #fff; }
.legend { color: #0000a8; text-align: center; }
.readout { display: flex; align-items: center; justify-content: center; border: 2px solid #b0b0b0; background: #5fb0b0; color: #f0f000; min-height: 0; }
.flip { transform: rotate(180deg); }

.upper { display: flex; justify-content: space-between; align-items: flex-start; }
.display { padding-left: 14px; }
.modes { display: flex; gap: 2px; height: 17px; padding: 0 7px 0 1px; }
.fft { width: 52px; margin-right: auto; }
.liss { width: 34px; }
.ch8 { width: 36px; }
.s { width: 19px; }
.range { display: block; width: 211px; height: 14px; margin: 3px 0 1px 18px; }
.screen { display: block; width: 236px; height: 219px; }
.traces { fill: none; }
.tags path { fill: none; stroke: currentColor; }
.tags text { font: 7px "Liberation Sans", sans-serif; fill: currentColor; }

.controls { width: 144px; padding-top: 1px; display: flex; flex-direction: column; gap: 3px; }
.run { display: grid; grid-template-columns: 58px 1fr; gap: 3px; height: 17px; }
.time { display: grid; grid-template-columns: 67px 1fr; gap: 3px; height: 54px; }
.tdiv { display: grid; grid-template-rows: 17px 18px 14px; padding: 0 3px; row-gap: 1px; line-height: 17px; }
.pair { display: grid; grid-template-columns: 1fr 1fr; gap: 3px; }
.sweep { display: grid; grid-template-rows: repeat(3, minmax(0, 1fr)); gap: 1px; }
.trigger { height: 19px; }
.channels { padding: 1px 3px 2px; }
.rows { display: grid; grid-template: repeat(8, minmax(0, 1fr)) / 38px 41px 18px 36px; justify-content: space-between; height: 132px; }
.rows .readout { border-width: 1px; margin-right: -2px; }
.rows .unit { border-radius: 0 4px 4px 0; }
.dc { color: #20b8d8; }
.adjust { display: grid; grid-template: 14px 14px / 33px repeat(4, 23px); gap: 1px 2px; margin-top: 1px; justify-content: space-between; }
.adjust .two { grid-column: span 2; }
.c1 { color: #00e820; }
.c2 { color: #f000f0; }
.c3 { color: #f8b400; }
.c4 { color: #20d0e8; }
.c5 { color: #10e0a0; }
.c6 { color: #d00078; }
.c7 { color: #c8e800; }
.c8 { color: #00a8e0; }
.selected { background: #00a8d8; border-color: #00a8d8; color: #fff; font-weight: bold; }

.lower { display: flex; height: 41px; margin-top: 3px; padding-left: 1px; gap: 1px; }
.side { display: grid; grid-template-rows: 17px 17px; align-content: center; gap: 4px; width: 28px; margin-right: 4px; }
.peak { width: 81px; padding: 3px 3px 0; display: flex; flex-direction: column; align-items: center; justify-content: space-between; }
.peak .legend { border-bottom: 1px solid #38b0a0; line-height: 17px; }
.peaks { display: grid; grid-template-columns: 26px 19px 1fr; align-self: stretch; height: 17px; }
.meter { width: 135px; padding-right: 3px; display: grid; grid-template: repeat(2, minmax(0, 1fr)) / 42px 1fr; column-gap: 3px; }
.meter span { display: flex; align-items: center; justify-content: center; border-right: 1px solid #38b0a0; }
.meter span:first-child { border-bottom: 1px solid #38b0a0; }
.meter .readout { margin: 1px 0; }

.vscroll, .hscroll { display: flex; align-items: center; background: #f0f0f0; }
.vscroll { flex-direction: column; }
.vscroll button, .hscroll button { width: 17px; height: 17px; display: flex; align-items: center; justify-content: center; }
.thumb { width: 17px; height: 17px; background: #cdc9c6; }
.vscroll .end { margin-top: auto; }
.hscroll .end { margin-left: auto; }

.statusbar { display: flex; gap: 5px; height: 20px; flex: none; padding: 1px 8px 1px 7px; font: 14px/16px "Noto Sans CJK JP", sans-serif; }
.message { flex: 1; padding-left: 4px; white-space: pre; border: solid #a0a0a0; border-width: 1px 0 0 1px; overflow: hidden; }
.half { font: 12px "Liberation Mono", monospace; }
.caps { width: 38px; padding-left: 4px; font: 12px/17px "Liberation Mono", monospace; color: #888; border: solid #a0a0a0; border-width: 1px 0 0 1px; }
```
